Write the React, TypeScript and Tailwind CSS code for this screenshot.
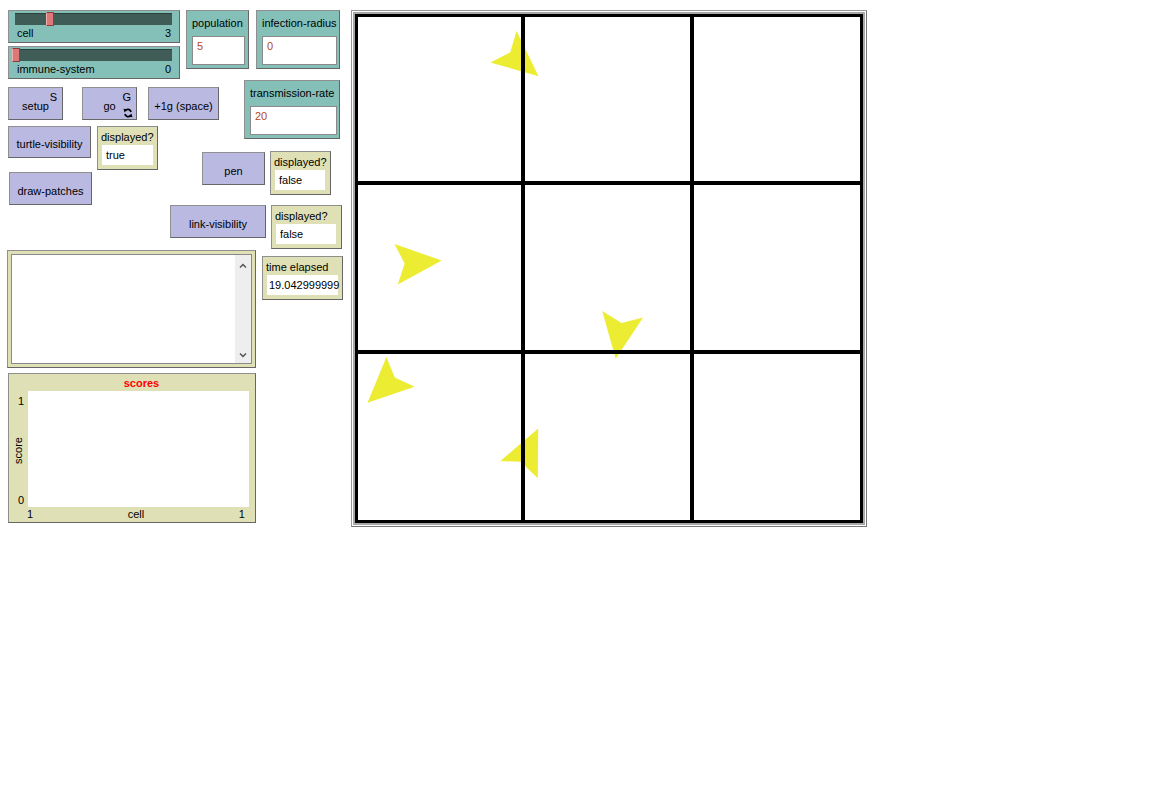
import React from "react";

// NetLogo interface tab: widgets sit at their own coordinates on a free canvas
const font = "font-['Liberation_Sans',Arial,sans-serif] text-[11px] leading-[12px] text-black";
const frame = "absolute border border-[#8f8f8f] border-r-[#666666] border-b-[#666666]";

interface SliderProps {
  pos: string;
  label: string;
  value: string;
  thumb: string;
}

const Slider = ({ pos, label, value, thumb }: SliderProps) => (
  <div className={`${frame} ${pos} w-[172px] h-[33px] bg-[#84c0b8]`}>
    <div className="relative ml-[6px] mt-[2px] w-[157px] h-[12px] bg-[#3f5c56] border-t border-[#2b3f3b]">
      <div className={`absolute ${thumb} top-[-2px] w-[8px] h-[14px] bg-[#dc7878] border border-[#8e3c3c] border-l-[#f0b0b0]`} />
    </div>
    <div className="flex justify-between px-[8px] mt-[2px]">
      <span>{label}</span>
      <span>{value}</span>
    </div>
  </div>
);

interface InputProps {
  pos: string;
  label: string;
  value: string;
  inner: string;
}

const InputBox = ({ pos, label, value, inner }: InputProps) => (
  <div className={`${frame} ${pos} h-[59px] bg-[#84c0b8]`}>
    <div className="pl-[5px] mt-[6px] whitespace-nowrap">{label}</div>
    <div className={`ml-[5px] mt-[7px] ${inner} h-[29px] bg-white border border-[#8a8a8a] pl-[4px] pt-[3px] text-[#b04a1c]`}>
      {value}
    </div>
  </div>
);

interface ButtonProps {
  pos: string;
  label: string;
  hotkey?: string;
  forever?: boolean;
}

const NlButton = ({ pos, label, hotkey, forever }: ButtonProps) => (
  <div className={`${frame} ${pos} bg-[#bab9e2] flex items-center justify-center pt-[4px]`}>
    <span className="whitespace-nowrap">{label}</span>
    {hotkey && <span className="absolute right-[5px] top-[3px]">{hotkey}</span>}
    {forever && (
      <svg className="absolute right-[3px] top-[20px]" width="10" height="10" viewBox="0 0 10 10">
        <path d="M8 4 A3.2 3.2 0 0 0 2.3 2.6" stroke="#000" strokeWidth="1.8" fill="none" />
        <polygon points="0.5,0.8 4.2,1.4 1.6,4.6" fill="#000" />
        <path d="M2 6 A3.2 3.2 0 0 0 7.7 7.4" stroke="#000" strokeWidth="1.8" fill="none" />
        <polygon points="9.5,9.2 5.8,8.6 8.4,5.4" fill="#000" />
      </svg>
    )}
  </div>
);

interface MonitorProps {
  pos: string;
  label: string;
  value: string;
  inner: string;
  pad?: string;
}

const Monitor = ({ pos, label, value, inner, pad = "pl-[4px]" }: MonitorProps) => (
  <div className={`${frame} ${pos} h-[44px] bg-[#e0e0b6] overflow-hidden`}>
    <div className="pl-[3px] mt-[4px] whitespace-nowrap">{label}</div>
    <div className={`ml-[4px] mt-[2px] ${inner} h-[20px] bg-white ${pad} leading-[20px] whitespace-nowrap`}>
      {value}
    </div>
  </div>
);

const turtles = [
  "161.6,17.1 183.5,62.2 135.3,48.5 155.2,38.3",
  "39.5,229.9 86.7,246.6 42.8,270.5 49.6,249.4",
  "247.2,297.1 266.5,309 288.1,303.6 260.7,344.8",
  "31.4,343.1 39.8,363.6 59.7,372.8 12.5,388.8",
  "183.2,414.4 182.8,464.2 165.6,447.8 145.4,447.1",
];

const WorldView = () => (
  <div className="absolute left-[351px] top-[10px] border border-[#9a9a9a] border-r-[#777777] border-b-[#777777] bg-white p-[1px]">
    <div className="border-2 border-[#a8a8a8]">
      <svg width="508" height="509" viewBox="0 0 508 509" className="block">
        <rect x="0" y="0" width="508" height="509" fill="#fff" />
        {turtles.map((p) => (
          <polygon key={p} points={p} fill="#ecec33" />
        ))}
        <rect x="1.5" y="1.5" width="505" height="506" fill="none" stroke="#000" strokeWidth="3" />
        <rect x="166" y="0" width="4" height="509" fill="#000" />
        <rect x="335" y="0" width="4" height="509" fill="#000" />
        <rect x="0" y="167" width="508" height="4" fill="#000" />
        <rect x="0" y="336" width="508" height="4" fill="#000" />
      </svg>
    </div>
  </div>
);

const OutputArea = () => (
  <div className={`${frame} left-[7px] top-[250px] w-[249px] h-[118px] bg-[#e0e0b6] p-[3px]`}>
    <div className="flex h-full bg-white border border-[#8a8a8a]">
      <div className="flex-1" />
      <div className="w-[16px] bg-[#eeeeee] flex flex-col items-center justify-between pt-[8px] pb-[5px]">
        <svg width="8" height="5" viewBox="0 0 8 5">
          <polyline points="1,4.5 4,1.5 7,4.5" stroke="#555" strokeWidth="1.5" fill="none" />
        </svg>
        <svg width="8" height="5" viewBox="0 0 8 5">
          <polyline points="1,0.5 4,3.5 7,0.5" stroke="#555" strokeWidth="1.5" fill="none" />
        </svg>
      </div>
    </div>
  </div>
);

const Plot = () => (
  <div className={`${frame} left-[8px] top-[373px] w-[248px] h-[150px] bg-[#e0e0b6]`}>
    <div className="h-[17px] pt-[3px] pl-[19px] text-center font-bold text-[#ff0000]">scores</div>
    <div className="flex h-[116px]">
      <div className="w-[19px] flex flex-col items-end pr-[4px]">
        <span className="mt-[4px]">1</span>
        <div className="flex-1 flex items-center self-center ml-[2px]">
          <span className="[writing-mode:vertical-lr] rotate-180">score</span>
        </div>
        <span className="mb-[1px]">0</span>
      </div>
      <div className="w-[221px] bg-white" />
    </div>
    <div className="flex justify-between pl-[18px] pr-[10px] leading-[14px]">
      <span>1</span>
      <span>cell</span>
      <span>1</span>
    </div>
  </div>
);

export default function App() {
  return (
    <div className={`relative w-[1176px] h-[791px] bg-white ${font}`}>
      <Slider pos="left-[8px] top-[10px]" label="cell" value="3" thumb="left-[31px]" />
      <Slider pos="left-[8px] top-[46px]" label="immune-system" value="0" thumb="left-[-3px]" />

      <InputBox pos="left-[186px] top-[10px] w-[63px]" label="population" value="5" inner="w-[53px]" />
      <InputBox pos="left-[256px] top-[10px] w-[84px]" label="infection-radius" value="0" inner="w-[75px]" />
      <InputBox pos="left-[244px] top-[80px] w-[96px]" label="transmission-rate" value="20" inner="w-[87px]" />

      <NlButton pos="left-[8px] top-[87px] w-[55px] h-[33px]" label="setup" hotkey="S" />
      <NlButton pos="left-[82px] top-[87px] w-[55px] h-[33px]" label="go" hotkey="G" forever />
      <NlButton pos="left-[148px] top-[87px] w-[71px] h-[33px]" label="+1g (space)" />

      <NlButton pos="left-[8px] top-[126px] w-[83px] h-[32px]" label="turtle-visibility" />
      <Monitor pos="left-[97px] top-[126px] w-[61px]" label="displayed?" value="true" inner="w-[51px]" />
      <NlButton pos="left-[9px] top-[172px] w-[83px] h-[33px]" label="draw-patches" />

      <NlButton pos="left-[202px] top-[152px] w-[63px] h-[33px]" label="pen" />
      <Monitor pos="left-[270px] top-[151px] w-[61px]" label="displayed?" value="false" inner="w-[50px]" />

      <NlButton pos="left-[170px] top-[205px] w-[96px] h-[33px]" label="link-visibility" />
      <Monitor pos="left-[271px] top-[205px] w-[71px]" label="displayed?" value="false" inner="w-[60px]" />

      <OutputArea />
      <Monitor
        pos="left-[262px] top-[256px] w-[81px]"
        label="time elapsed"
        value="19.042999999"
        inner="w-[71px]"
        pad="pl-[2px]"
      />
      <Plot />

      <WorldView />
    </div>
  );
}
